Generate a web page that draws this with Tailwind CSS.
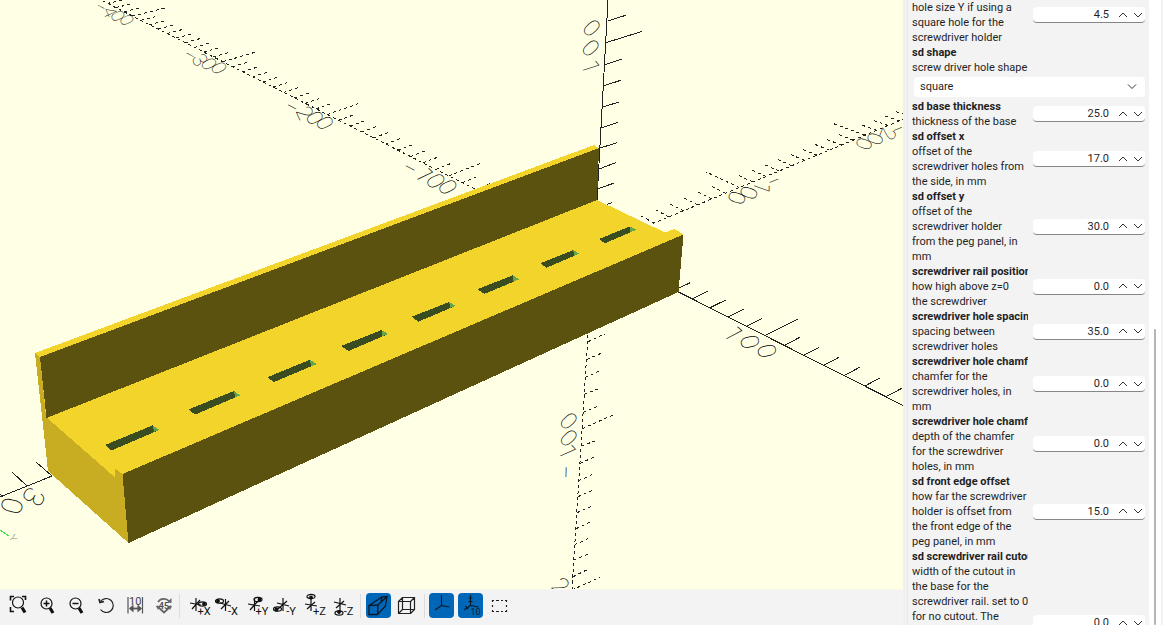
<!DOCTYPE html>
<html lang="en">
<head>
    <meta charset="UTF-8">
    <meta name="viewport" content="width=device-width, initial-scale=1.0">
    <title>Screwdriver holder - Customizer</title>
    <!-- Tailwind CSS CDN -->
    <script src="https://cdn.jsdelivr.net/npm/@tailwindcss/browser@4"></script>
</head>
<body class="h-screen flex overflow-hidden bg-[#f1f1f1] text-[#1f1f1f] font-['Roboto','Open_Sans',sans-serif]">

    <!-- 3D view + toolbar -->
    <main class="flex-1 min-w-0 flex flex-col">
        <div class="flex-1 min-h-0 overflow-hidden bg-[#ffffe5]">
            <svg class="w-full h-full" viewBox="0 0 903 589" preserveAspectRatio="xMinYMin slice" role="img" aria-label="3D preview">
                <g fill="none" stroke="#222" stroke-width="1" shape-rendering="crispEdges">
                    <path id="solidAxes"/>
                    <path id="dashedAxes" stroke-dasharray="3 3"/>
                    <!-- Z axis, up -->
                    <path d="M608 0L597 200 M607.7 21L625.7 15.3 M606 42.7L642.3 31.3 M604.7 64.7L622.3 59 M603.3 86L620.7 80.3 M602 107.3L619 102 M601 128L618.3 122.3 M599.3 148.3L617 142.7 M598.3 169.3L615.7 162.7 M597.3 189L614.3 183 M607 204.5L612.5 202.5"/>
                    <!-- Z axis, down -->
                    <path stroke-dasharray="3 3" d="M588 335L572 589 M588 341.7L604.7 334 M587 359.3L602.7 352.7 M585.3 377.3L601.3 370.3 M584.3 394.3L600 388.3 M583.3 412.3L598.7 406 M582.3 428.7L614.7 414.3 M581.3 446L597 440.3 M580 463.3L596 456.3 M578.7 480.7L595 473.3 M578 496.7L593 490 M577 512.7L593 505.7 M576 528.7L591.7 521.3 M574.7 544.7L590.3 537.7 M573.7 560L589.7 553.7 M573 576.7L588.7 569 M572 590L600 577.3"/>
                    <!-- Y axis, near end -->
                    <path d="M0 497L52 476L36 462 M27 486L12 472 M2 496L0 494"/>
                    <path stroke="#3fdc4c" d="M0 530L9 536"/>
                </g>
                <g id="labels" fill="#000" class="font-['Roboto'] font-thin"></g>

                <g shape-rendering="crispEdges">
                    <path fill="#f2d42a" d="M35 353L594 145L599 148L597 200L665 232.5L674.5 229L683.5 234.5L122.5 474L114 477L46 418L40 357Z"/>
                    <path fill="#c8ad22" d="M35 353L40 357L46 417L114.5 477V468L122.5 474L128.5 543L48 471Z"/>
                    <path fill="#5c520f" d="M40 357L599 148L597 200L46.5 418Z M122.5 474L683.5 234.5L678.5 292L128.5 543Z"/>
                    <path fill="#3a4d20" d="M105 445L152.7 425.3L159.3 430L111 450.7Z M188.7 409.3L234 391L240 395.3L195 414.7Z M267.3 377.3L310 359.7L316.7 364L274 382Z M341 346L381.7 330L388 334L348.7 351Z M411.7 316.7L449.3 302L455.3 306L418.3 321.7Z M477.3 289.3L512.7 275.3L519.3 279.3L484.3 294Z M540.3 263.3L573.3 250L579.3 253.7L546.7 267.7Z M599 239L630 226.3L636.7 229.7L605 243.3Z"/>
                    <path fill="#63a54b" d="M152.7 425.3L159.3 430L154 432Z M234 391L240 395.3L235 397.5Z M310 359.7L316.7 364L311 366.5Z M381.7 330L388 334L382.5 336Z M449.3 302L455.3 306L450 308Z M512.7 275.3L519.3 279.3L513.5 281.5Z M573.3 250L579.3 253.7L574 256Z M630 226.3L636.7 229.7L630.5 232Z"/>
                </g>
            </svg>
        </div>

        <!-- Toolbar -->
        <div class="h-9 shrink-0 flex items-center gap-1 pl-[5px] pb-1 bg-[#f3f3f3] border-t border-[#f8f8ee]">
            <button aria-label="View all" class="size-[25px] rounded-sm"><svg viewBox="0 0 25 25" fill="none" stroke="#111" stroke-width="1.2"><path d="M5.500 7.500V3.500H9 M17 3.500H20.500V7 M5.500 14V18.500H9" stroke-width="1.600"/><circle cx="13" cy="9.500" r="5.500"/><path d="M17 14.500L20 19.500" stroke-width="3.200"/></svg></button>
            <button aria-label="Zoom in" class="size-[25px] rounded-sm"><svg viewBox="0 0 25 25" fill="none" stroke="#111" stroke-width="1.2"><circle cx="12.500" cy="10.500" r="5.500"/><path d="M9.500 10.500H15.500M12.500 7.500V13.500" stroke-width="1.500"/><path d="M16 15L19 20" stroke-width="3.200"/></svg></button>
            <button aria-label="Zoom out" class="size-[25px] rounded-sm"><svg viewBox="0 0 25 25" fill="none" stroke="#111" stroke-width="1.2"><circle cx="12.500" cy="10.500" r="5.500"/><path d="M9.500 10.500H15.500" stroke-width="1.500"/><path d="M16 15L19 20" stroke-width="3.200"/></svg></button>
            <button aria-label="Reset view" class="size-[25px] rounded-sm"><svg viewBox="0 0 25 25" fill="none" stroke="#222" stroke-width="1.2"><path d="M8.500 8.500A7 7 0 1 1 8.500 16.500"/><path d="M7 6L8 9.500L12 8.500" stroke-width="1.700"/></svg></button>
            <button aria-label="Measure distance" class="size-[25px] rounded-sm"><svg viewBox="0 0 25 25" fill="none" stroke="#555" stroke-width="1.200"><path d="M7 4V20.500M21.500 4V20.500"/><path d="M9 15.500H20" stroke-width="1.800"/><path d="M12.500 11.500L8 15.500L12.500 19.500ZM16.500 11.500L21 15.500L16.500 19.500Z" fill="#555" stroke="none"/><text x="14.300" y="12" font-size="11" text-anchor="middle" fill="#444" stroke="none">10</text></svg></button>
            <button aria-label="Measure angle" class="size-[25px] rounded-sm"><svg viewBox="0 0 25 25" fill="none" stroke="#666" stroke-width="1.800"><path d="M8 9A7 7 0 0 1 19 8M7 13L14 19.500L21 13"/><path d="M17 9.500L21.500 10V5ZM6 13H10L8 17ZM22 13H18L20 17Z" fill="#666" stroke="none"/><text x="14" y="15.500" font-size="9" font-weight="700" text-anchor="middle" fill="#555" stroke="none">45</text></svg></button>
            <span class="w-px h-6 mr-0.5 bg-[#dcdcdc]"></span>
            <button aria-label="View from +X" class="size-[25px] rounded-sm"><svg viewBox="0 0 25 25" fill="none" stroke="#111" stroke-width="1.200"><path d="M10 5V18M4 10L15 12M6 16L14 7"/><ellipse cx="16.500" cy="11" rx="4" ry="2.200"/><circle cx="18" cy="11" r="1.300" fill="#111"/><text x="18" y="22" font-size="11" text-anchor="middle" fill="#111" stroke="none">+X</text></svg></button>
            <button aria-label="View from -X" class="size-[25px] rounded-sm"><svg viewBox="0 0 25 25" fill="none" stroke="#111" stroke-width="1.200"><path d="M10.500 6V18M5 10L16 13M6 16L14 8"/><ellipse cx="4.500" cy="8" rx="4" ry="2.200"/><circle cx="3" cy="8" r="1.300" fill="#111"/><text x="18" y="22" font-size="11" text-anchor="middle" fill="#111" stroke="none">-X</text></svg></button>
            <button aria-label="View from +Y" class="size-[25px] rounded-sm"><svg viewBox="0 0 25 25" fill="none" stroke="#111" stroke-width="1.200"><path d="M10.500 5V18M4 11L16 13M6 17L14 8"/><ellipse cx="14" cy="6.500" rx="4" ry="2.200"/><circle cx="15.500" cy="6.500" r="1.300" fill="#111"/><text x="18" y="22" font-size="11" text-anchor="middle" fill="#111" stroke="none">+Y</text></svg></button>
            <button aria-label="View from -Y" class="size-[25px] rounded-sm"><svg viewBox="0 0 25 25" fill="none" stroke="#111" stroke-width="1.200"><path d="M10 5V18M4 10L16 13M5 16L14 8"/><ellipse cx="4.500" cy="16" rx="4" ry="2.200"/><circle cx="3.500" cy="16.500" r="1.300" fill="#111"/><text x="18" y="22" font-size="11" text-anchor="middle" fill="#111" stroke="none">-Y</text></svg></button>
            <button aria-label="View from +Z" class="size-[25px] rounded-sm"><svg viewBox="0 0 25 25" fill="none" stroke="#111" stroke-width="1.200"><path d="M9 6V18M3 11L15 13M5 16L13 9"/><ellipse cx="9" cy="3.500" rx="4" ry="2.200"/><circle cx="9" cy="4.500" r="1.300" fill="#111"/><text x="17.500" y="22" font-size="11" text-anchor="middle" fill="#111" stroke="none">+Z</text></svg></button>
            <button aria-label="View from -Z" class="size-[25px] rounded-sm"><svg viewBox="0 0 25 25" fill="none" stroke="#111" stroke-width="1.200"><path d="M9 5V18M3 9L15 12M5 15L13 8"/><ellipse cx="8" cy="20" rx="4" ry="2.200"/><circle cx="8" cy="19" r="1.300" fill="#111"/><text x="17.500" y="22" font-size="11" text-anchor="middle" fill="#111" stroke="none">-Z</text></svg></button>
            <span class="w-px h-6 mr-px bg-[#dcdcdc]"></span>
            <button aria-label="Perspective" aria-pressed="true" class="size-[25px] rounded-sm bg-[#0067b8]"><svg viewBox="0 0 25 25" fill="none" stroke="#0b1a2a" stroke-width="1.300"><path d="M3 12.500L12 12L11.500 21.500H3ZM3 12.500L16 4L21 3.500L12 12M21 3.500L19.500 13L11.500 21.500M16 4L15 9"/></svg></button>
            <button aria-label="Orthogonal" class="size-[25px] rounded-sm"><svg viewBox="0 0 25 25" fill="none" stroke="#222" stroke-width="1.200"><path d="M3.500 8.500H15.500V20.500H3.500ZM7.500 4.500H19.500V16.500H7.500ZM3.500 8.500L7.500 4.500M15.500 8.500L19.500 4.500M15.500 20.500L19.500 16.500M3.500 20.500L7.500 16.500"/></svg></button>
            <span class="w-px h-6 bg-[#dcdcdc]"></span>
            <button aria-label="Show axes" aria-pressed="true" class="size-[25px] rounded-sm bg-[#0067b8]"><svg viewBox="0 0 25 25" fill="none" stroke="#0b1a2a" stroke-width="1.200"><path d="M12.500 2V12.500L20.500 14M12.500 12.500L6 17"/></svg></button>
            <button aria-label="Show scale markers" aria-pressed="true" class="size-[25px] rounded-sm bg-[#0067b8]"><svg viewBox="0 0 25 25" fill="none" stroke="#0b1a2a" stroke-width="1.200"><path d="M12.500 2V12.500L20.500 14M12.500 12.500L6 17M10.500 5H14.500M10.500 8.500H14.500M7.500 13L10 16"/><text x="17.500" y="22" font-size="9" text-anchor="middle" fill="#0b1a2a" stroke="none">10</text></svg></button>
            <button aria-label="Show edges" class="size-[25px] rounded-sm"><svg viewBox="0 0 25 25" fill="none" stroke="#222" stroke-width="1.200"><path d="M5 7.500H20M5 18.500H20" stroke-dasharray="2 2 3 2"/><path d="M5.500 7V19M19.500 7V19" stroke-dasharray="2 3"/></svg></button>
        </div>
    </main>

    <!-- Customizer parameters -->
    <aside class="w-[260px] shrink-0 flex pl-1 overflow-hidden">
        <form class="w-[242px] border-l border-[#e9e9e9] bg-[#f3f3f3] pl-1 -mt-[15px] text-[11px] leading-[15px] whitespace-nowrap">
            <div class="flex items-center gap-[5px]">
                <label for="holeY" class="w-[116px] overflow-hidden"><b>sd hole size y</b><br>hole size Y if using a<br>square hole for the<br>screwdriver holder</label>
                <div class="spin w-28 h-4 flex items-center bg-white rounded-sm border-b border-[#868686]"><input id="holeY" value="4.5" class="w-[76px] min-w-0 text-right outline-none"></div>
            </div>
            <label for="shape" class="block"><b>sd shape</b><br>screw driver hole shape</label>
            <div class="relative h-6 pt-0.5 ml-0.5 mr-1">
                <select id="shape" class="block w-full h-5 pl-1.5 bg-white rounded-sm appearance-none leading-5"><option>square</option><option>round</option></select>
                <svg class="absolute right-2 top-2 w-2.5 h-2 pointer-events-none" viewBox="0 0 10 8" fill="none" stroke="#333"><path d="M1 1.500L5 5.500L9 1.500"/></svg>
            </div>
            <div class="flex items-center gap-[5px]">
                <label for="base" class="w-[116px] overflow-hidden"><b>sd base thickness</b><br>thickness of the base</label>
                <div class="spin w-28 h-4 flex items-center bg-white rounded-sm border-b border-[#868686]"><input id="base" value="25.0" class="w-[76px] min-w-0 text-right outline-none"></div>
            </div>
            <div class="flex items-center gap-[5px]">
                <label for="offX" class="w-[116px] overflow-hidden"><b>sd offset x</b><br>offset of the<br>screwdriver holes from<br>the side, in mm</label>
                <div class="spin w-28 h-4 flex items-center bg-white rounded-sm border-b border-[#868686]"><input id="offX" value="17.0" class="w-[76px] min-w-0 text-right outline-none"></div>
            </div>
            <div class="flex items-center gap-[5px]">
                <label for="offY" class="w-[116px] overflow-hidden"><b>sd offset y</b><br>offset of the<br>screwdriver holder<br>from the peg panel, in<br>mm</label>
                <div class="spin w-28 h-4 flex items-center bg-white rounded-sm border-b border-[#868686]"><input id="offY" value="30.0" class="w-[76px] min-w-0 text-right outline-none"></div>
            </div>
            <div class="flex items-center gap-[5px]">
                <label for="railPos" class="w-[116px] overflow-hidden"><b>screwdriver rail position</b><br>how high above z=0<br>the screwdriver</label>
                <div class="spin w-28 h-4 flex items-center bg-white rounded-sm border-b border-[#868686]"><input id="railPos" value="0.0" class="w-[76px] min-w-0 text-right outline-none"></div>
            </div>
            <div class="flex items-center gap-[5px]">
                <label for="spacing" class="w-[116px] overflow-hidden"><b>screwdriver hole spacing</b><br>spacing between<br>screwdriver holes</label>
                <div class="spin w-28 h-4 flex items-center bg-white rounded-sm border-b border-[#868686]"><input id="spacing" value="35.0" class="w-[76px] min-w-0 text-right outline-none"></div>
            </div>
            <div class="flex items-center gap-[5px]">
                <label for="chamfer" class="w-[116px] overflow-hidden"><b>screwdriver hole chamfer</b><br>chamfer for the<br>screwdriver holes, in<br>mm</label>
                <div class="spin w-28 h-4 flex items-center bg-white rounded-sm border-b border-[#868686]"><input id="chamfer" value="0.0" class="w-[76px] min-w-0 text-right outline-none"></div>
            </div>
            <div class="flex items-center gap-[5px]">
                <label for="depth" class="w-[116px] overflow-hidden"><b>screwdriver hole chamfer depth</b><br>depth of the chamfer<br>for the screwdriver<br>holes, in mm</label>
                <div class="spin w-28 h-4 flex items-center bg-white rounded-sm border-b border-[#868686]"><input id="depth" value="0.0" class="w-[76px] min-w-0 text-right outline-none"></div>
            </div>
            <div class="flex items-center gap-[5px]">
                <label for="front" class="w-[116px] overflow-hidden"><b>sd front edge offset</b><br>how far the screwdriver<br>holder is offset from<br>the front edge of the<br>peg panel, in mm</label>
                <div class="spin w-28 h-4 flex items-center bg-white rounded-sm border-b border-[#868686]"><input id="front" value="15.0" class="w-[76px] min-w-0 text-right outline-none"></div>
            </div>
            <div class="flex items-center gap-[5px] h-[148px]">
                <label for="cutout" class="w-[116px] h-full overflow-hidden"><b>sd screwdriver rail cutout</b><br>width of the cutout in<br>the base for the<br>screwdriver rail. set to 0<br>for no cutout. The</label>
                <div class="spin w-28 h-4 flex items-center bg-white rounded-sm border-b border-[#868686]"><input id="cutout" value="0.0" class="w-[76px] min-w-0 text-right outline-none"></div>
            </div>
        </form>
        <!-- Scrollbar -->
        <div class="w-3 flex flex-col justify-end items-center bg-white">
            <div class="w-0.5 h-[296px] rounded-full bg-[#b4b4b4]"></div>
        </div>
    </aside>

    <template id="arrows">
        <button type="button" aria-label="Increase" class="w-4 h-3 ml-1.5 flex items-center justify-center"><svg class="w-2.5 h-2" viewBox="0 0 10 8" fill="none" stroke="#333"><path d="M1 6L5 2L9 6"/></svg></button>
        <button type="button" aria-label="Decrease" class="w-3.5 h-3 flex items-center justify-center"><svg class="w-2.5 h-2" viewBox="0 0 10 8" fill="none" stroke="#333"><path d="M1 2L5 6L9 2"/></svg></button>
    </template>

<script>
// step buttons
const arrows = document.getElementById('arrows');
document.querySelectorAll('.spin').forEach(box => {
    box.append(arrows.content.cloneNode(true));
    const input = box.querySelector('input');
    const [up, down] = box.querySelectorAll('button');
    up.onclick = () => input.value = (parseFloat(input.value) + 1).toFixed(1);
    down.onclick = () => input.value = (parseFloat(input.value) - 1).toFixed(1);
});

// ground axes in perspective, s counts units of 100 mm
const onX = s => [(592.7 + 103.1 * s) / (1 - 0.0905 * s), (248.6 + 56.7 * s) / (1 - 0.0905 * s)];
const onY = s => [(592.7 + 208 * s) / (1 + 0.083 * s), (248.6 - 45.5 * s) / (1 + 0.083 * s)];
const line = (x, y, dx, dy) => `M${x} ${y}L${x + dx} ${y + dy}`;

let solid = `M${onX(0.5)}L${onX(1.8)}`;
let dashed = `M${onX(-0.5)}L${onX(-4.4)}M${onY(0.39)}L${onY(2.5)}`;
for (let n = -44; n <= 18; n++) {
    if (n > -6 && n < 5) continue;
    const s = n / 10, k = n % 10 ? 0.48 : 1;
    const [x, y] = onX(s);
    const tick = line(x, y, 32.5 * k, -(14.7 + 1.7 * s) * k);
    if (n < 0) dashed += tick; else solid += tick;
}
for (let n = 4; n <= 25; n++) {
    const s = n / 10, k = n % 10 ? 0.46 : 1;
    const [x, y] = onY(s);
    dashed += line(x, y, -33 * k, -(19 - 3.5 * s) * k);
}
document.getElementById('solidAxes').setAttribute('d', solid);
document.getElementById('dashedAxes').setAttribute('d', dashed);

// axis numbers, each glyph given as centre x, centre y, rotation
function label(text, size, glyphs) {
    const el = document.createElementNS('http://www.w3.org/2000/svg', 'text');
    const xs = [], ys = [], rs = [];
    glyphs.forEach(([cx, cy, deg]) => {
        const a = deg * Math.PI / 180;
        const w = size * 0.28, h = size * 0.36;
        xs.push(cx - w * Math.cos(a) - h * Math.sin(a));
        ys.push(cy - w * Math.sin(a) + h * Math.cos(a));
        rs.push(deg);
    });
    el.setAttribute('x', xs.join(' '));
    el.setAttribute('y', ys.join(' '));
    el.setAttribute('rotate', rs.join(' '));
    el.setAttribute('font-size', size);
    el.textContent = text;
    document.getElementById('labels').append(el);
}
label('−400', 18, [[101, 7, 28], [110, 12, 66], [118, 16, 66], [127, 20, 66]]);
label('−300', 20, [[190, 55, 28], [200, 60, 66], [209, 64, 66], [219, 68, 66]]);
label('−200', 22, [[292, 107, 28], [305, 113, 66], [315, 118, 66], [325, 123, 66]]);
label('−100', 24, [[410, 168, 28], [425, 175, 64], [436, 181, 64], [448, 187, 64]]);
label('100', 25, [[734, 334, 62], [750, 342, 78], [767, 351, 78]]);
label('−100', 23, [[774, 181, -22], [762, 188, 110], [749, 193, 108], [737, 198, 108]]);
label('−200', 21, [[898, 129, -22], [888, 134, 110], [875, 139, 108], [864, 144, 108]]);
label('100', 24, [[591, 67, 72], [591, 48, 48], [592, 28, 48]]);
label('−100', 24, [[566, 472, 92], [568, 452, 66], [569, 438, 48], [569, 421, 48]]);
label('2', 24, [[561, 586, 48]]);
label('30', 29, [[34, 497, 118], [12, 506, 105]]);
label('Y', 10, [[13, 538, 60]]);
</script>
</body>
</html>
